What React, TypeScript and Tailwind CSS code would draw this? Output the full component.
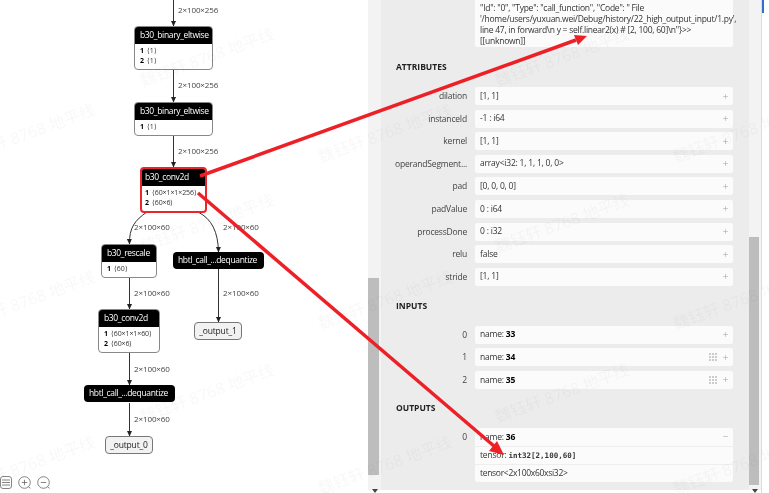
import React from 'react';
import { Plus, Minus } from 'lucide-react';

const SANS = 'font-["Open_Sans","Noto_Sans_CJK_SC",sans-serif]';

const marks = [
  { x: 28, y: 133 }, { x: 28, y: 300 }, { x: 28, y: 465 },
  { x: 207, y: 57 }, { x: 207, y: 223 }, { x: 207, y: 393 },
  { x: 385, y: 133 }, { x: 385, y: 300 }, { x: 385, y: 465 },
  { x: 562, y: 57 }, { x: 562, y: 223 }, { x: 562, y: 393 },
  { x: 740, y: 133 }, { x: 740, y: 300 }, { x: 740, y: 465 },
];

const edgeLabels = [
  { x: 178, y: 10, t: '2×100×256' },
  { x: 178, y: 85, t: '2×100×256' },
  { x: 178, y: 151, t: '2×100×256' },
  { x: 134, y: 227, t: '2×100×60' },
  { x: 223, y: 227, t: '2×100×60' },
  { x: 134, y: 293, t: '2×100×60' },
  { x: 223, y: 293, t: '2×100×60' },
  { x: 134, y: 369, t: '2×100×60' },
  { x: 134, y: 419, t: '2×100×60' },
];

const nodes = [
  { x: 134, y: 26, w: 79, title: 'b30_binary_eltwise', rows: ['1', '2'], vals: ['1', '1'] },
  { x: 134, y: 102, w: 79, title: 'b30_binary_eltwise', rows: ['1'], vals: ['1'] },
  { x: 140, y: 167, w: 67, title: 'b30_conv2d', rows: ['1', '2'], vals: ['60×1×1×256', '60×6'], active: true },
  { x: 101, y: 244, w: 56, title: 'b30_rescale', rows: ['1'], vals: ['60'] },
  { x: 98, y: 309, w: 62, title: 'b30_conv2d', rows: ['1', '2'], vals: ['60×1×1×60', '60×6'] },
  { x: 84, y: 385, w: 91, title: 'hbtl_call_...dequantize', rows: [], vals: [] },
  { x: 173, y: 252, w: 91, title: 'hbtl_call_...dequantize', rows: [], vals: [] },
];

const outputs = [
  { x: 105, y: 436, w: 48, t: '_output_0' },
  { x: 194, y: 322, w: 48, t: '_output_1' },
];

const attrs = [
  ['dilation', '[1, 1]'],
  ['instanceId', '-1 : i64'],
  ['kernel', '[1, 1]'],
  ['operandSegment...', 'array<i32: 1, 1, 1, 0, 0>'],
  ['pad', '[0, 0, 0, 0]'],
  ['padValue', '0 : i64'],
  ['processDone', '0 : i32'],
  ['relu', 'false'],
  ['stride', '[1, 1]'],
];

function Graph() {
  return (
    <div className="relative h-full w-[368px] shrink-0 bg-white">
      <svg className="absolute inset-0" width="368" height="493" fill="none" stroke="#333" strokeWidth="1">
        <defs>
          <marker id="ah" markerWidth="6" markerHeight="6" refX="5" refY="3" orient="auto" markerUnits="userSpaceOnUse">
            <path d="M0 0.5 L5.5 3 L0 5.5 Z" fill="#222" stroke="none" />
          </marker>
        </defs>
        <path d="M173.5 0V26" markerEnd="url(#ah)" />
        <path d="M173.5 70V102" markerEnd="url(#ah)" />
        <path d="M173.5 135V167" markerEnd="url(#ah)" />
        <path d="M147 212C135 220 129 228 129.5 244" markerEnd="url(#ah)" />
        <path d="M198 212C212 219 218 232 218.5 252" markerEnd="url(#ah)" />
        <path d="M129.5 277V309" markerEnd="url(#ah)" />
        <path d="M129.5 353V385" markerEnd="url(#ah)" />
        <path d="M129.5 403V436" markerEnd="url(#ah)" />
        <path d="M218.5 269V322" markerEnd="url(#ah)" />
      </svg>
      {edgeLabels.map((l, i) => (
        <span
          key={i}
          className="absolute -translate-y-1/2 text-[8px] leading-none tracking-[-0.1px] whitespace-nowrap text-[#444]"
          style={{ left: l.x, top: l.y }}
        >
          {l.t}
        </span>
      ))}
      {nodes.map((n, i) => (
        <div
          key={i}
          className={`absolute overflow-hidden rounded-[4px] bg-white ${n.active ? 'border-2 border-[#e8262c]' : n.rows.length ? 'border border-[#888]' : ''}`}
          style={{ left: n.x, top: n.y, width: n.w }}
        >
          <div className={`flex h-[17px] items-center bg-black text-[8.5px] tracking-[-0.35px] whitespace-nowrap text-white ${n.active ? 'px-[3px]' : 'px-[5px]'}`}>{n.title}</div>
          {n.rows.length > 0 && (
            <div className={`flex flex-col gap-[1.5px] py-[3px] ${n.active ? 'px-[3px]' : 'px-[5px]'}`}>
              {n.rows.map((r, j) => (
                <div key={j} className="flex h-[8.5px] items-center text-[7px] tracking-[-0.1px] whitespace-nowrap text-[#333]">
                  <b className="mr-[3px] text-black">{r}</b>
                  <span>⟨{n.vals[j]}⟩</span>
                </div>
              ))}
            </div>
          )}
        </div>
      ))}
      {outputs.map((o, i) => (
        <div
          key={i}
          className="absolute flex h-[18px] items-center justify-center rounded-[4px] border border-[#777] bg-[#f2f2f2] text-[8.5px] tracking-[-0.2px] text-[#222]"
          style={{ left: o.x, top: o.y, width: o.w }}
        >
          {o.t}
        </div>
      ))}
      <div className="absolute bottom-[4px] left-0 flex items-center gap-[6px] text-[#555]">
        <svg width="12" height="13" viewBox="0 0 12 13" fill="none" stroke="#666" strokeWidth="0.8">
          <rect x="0.5" y="0.5" width="11" height="12" rx="2.5" />
          <path d="M2 4h8M2 6.5h8M2 9h8" />
        </svg>
        <svg width="13" height="13" viewBox="0 0 13 13" fill="none" stroke="#666" strokeWidth="0.8">
          <circle cx="6.5" cy="6.5" r="5.8" />
          <path d="M6.5 3.8v5.4M3.8 6.5h5.4M10.5 10.8l2 1.5" />
        </svg>
        <svg width="13" height="13" viewBox="0 0 13 13" fill="none" stroke="#666" strokeWidth="0.8">
          <circle cx="6.5" cy="6.5" r="5.8" />
          <path d="M3.8 6.5h5.4M10.5 10.8l2 1.5" />
        </svg>
      </div>
    </div>
  );
}

function Row({ label, value, grid, open }: { label: string; value: React.ReactNode; grid?: boolean; open?: boolean }) {
  return (
    <div className="flex items-start">
      <div className="w-[86px] shrink-0 pr-[8px] text-right text-[8.5px] leading-[18px] tracking-[-0.2px] whitespace-nowrap text-[#444]">{label}</div>
      <div className="w-[258px] overflow-hidden rounded-[2px] bg-[#fbfbfb] text-[8.5px] tracking-[-0.2px] text-[#333]">
        <div className="flex h-[18px] items-center justify-between pr-[4px] pl-[5px]">
          <span>{value}</span>
          <span className="flex items-center gap-[5px] text-[#aaa]">
            {grid && (
              <span className="grid grid-cols-3 gap-px">
                {Array.from({ length: 9 }).map((_, i) => (
                  <i key={i} className="h-[2px] w-[2px] bg-[#ccc]" />
                ))}
              </span>
            )}
            {open ? <Minus size={7} /> : <Plus size={7} />}
          </span>
        </div>
        {open && (
          <>
            <div className="flex h-[18px] items-center border-t border-[#eee] pl-[5px]">
              tensor:&nbsp;<b className='font-["DejaVu_Sans_Mono",monospace] text-[7.5px] font-semibold tracking-normal'>int32[2,100,60]</b>
            </div>
            <div className="flex h-[18px] items-center border-t border-[#eee] pl-[5px] tracking-[-0.3px]">tensor&lt;2x100x60xsi32&gt;</div>
          </>
        )}
      </div>
    </div>
  );
}

function Name({ v }: { v: string }) {
  return (
    <>
      name: <b className="font-bold text-black">{v}</b>
    </>
  );
}

function ScrollArrow() {
  return (
    <svg className="mx-auto mt-auto mb-[-3px]" width="6" height="4" viewBox="0 0 6 4" fill="#444">
      <path d="M0 0h6L3 4Z" />
    </svg>
  );
}

function Panel() {
  return (
    <div className="flex h-full min-w-0 flex-1">
      <div className="flex h-[490px] w-[13px] shrink-0 flex-col bg-[#f3f3f3] pt-[278px]">
        <div className="h-[197px] w-[11px] shrink-0 bg-[#bdbdbd]" />
        <ScrollArrow />
      </div>
      <div className="h-[490px] w-[368px] shrink-0 bg-[#ececec] pl-[15px]">
        <div className="ml-[79px] h-[47px] w-[258px] rounded-b-[2px] bg-[#fbfbfb] pt-[2px] pl-[5px] text-[8.5px] leading-[11px] tracking-[-0.25px] text-[#333]">
          "Id": "0", "Type": "call_function", "Code": " File
          <br />
          '/home/users/yuxuan.wei/Debug/history/22_high_output_input/1.py',
          <br />
          {'line 47, in forward\\n y = self.linear2(x) # [2, 100, 60]\\n"}>>'}
          <br />
          [[unknown]]
        </div>
        <h3 className="mt-[14px] text-[8.5px] leading-[12px] font-bold text-[#222]">ATTRIBUTES</h3>
        <div className="mt-[14px] -ml-[7px] flex flex-col gap-[4.6px]">
          {attrs.map(([k, v]) => (
            <Row key={k} label={k} value={v} />
          ))}
        </div>
        <h3 className="mt-[14px] text-[8.5px] leading-[12px] font-bold text-[#222]">INPUTS</h3>
        <div className="mt-[14px] -ml-[7px] flex flex-col gap-[4.6px]">
          <Row label="0" value={<Name v="33" />} />
          <Row label="1" value={<Name v="34" />} grid />
          <Row label="2" value={<Name v="35" />} grid />
        </div>
        <h3 className="mt-[13px] text-[8.5px] leading-[12px] font-bold text-[#222]">OUTPUTS</h3>
        <div className="mt-[14px] -ml-[7px]">
          <Row label="0" value={<Name v="36" />} open />
        </div>
      </div>
      <div className="flex h-[490px] w-[12px] shrink-0 flex-col bg-[#f3f3f3] pt-[237px]">
        <div className="h-[248px] w-[10px] shrink-0 bg-[#bdbdbd]" />
        <ScrollArrow />
      </div>
      <div className="flex-1 border-l border-[#ddd] bg-white">
        <div className="h-[13px] w-[2px] bg-[#2f6fd0]" />
      </div>
    </div>
  );
}

export default function App() {
  return (
    <div className={`relative flex h-[493px] w-[769px] overflow-hidden bg-white blur-[0.35px] ${SANS}`}>
      <Graph />
      <Panel />
      {marks.map((m, i) => (
        <span
          key={i}
          className="pointer-events-none absolute -translate-x-1/2 -translate-y-1/2 -rotate-[20deg] text-[16px] whitespace-nowrap text-black/[0.03]"
          style={{ left: m.x, top: m.y }}
        >
          魏钰轩 8768 地平线
        </span>
      ))}
      <svg className="pointer-events-none absolute inset-0" width="769" height="493" fill="#ee2027" stroke="none">
        <path d="M200 176L576 40" stroke="#ee2027" strokeWidth="3.5" />
        <path d="M587 36L574 35L578 45Z" />
        <path d="M198 193L494 446" stroke="#ee2027" strokeWidth="3.5" />
        <path d="M504 455L497 441L489 451Z" />
      </svg>
    </div>
  );
}
